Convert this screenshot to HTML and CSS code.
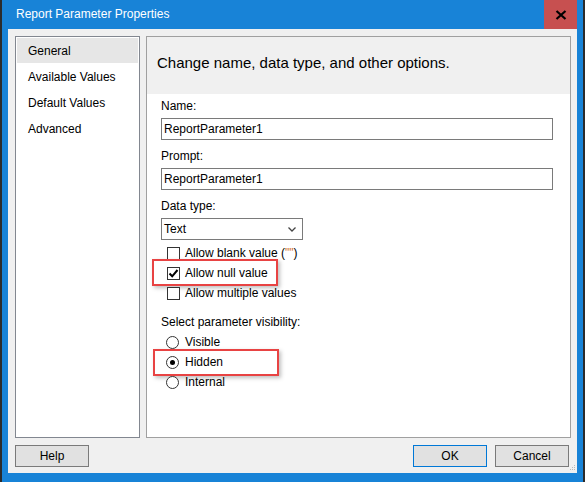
FILE: index.html
```html
<!DOCTYPE html>
<html lang="en">
<head>
<meta charset="utf-8">
<title>Report Parameter Properties</title>
<link rel="stylesheet" href="styles.css">
</head>
<body>
<div class="window">
  <div class="titlebar">
    <span class="title">Report Parameter Properties</span>
    <div class="close">
      <svg width="12" height="10" viewBox="0 0 12 10"><path d="M1.5 1 L10.5 9 M10.5 1 L1.5 9" stroke="#000" stroke-width="2.2" fill="none"/></svg>
    </div>
  </div>
  <div class="client">
    <div class="main">
      <ul class="nav">
        <li class="active">General</li>
        <li>Available Values</li>
        <li>Default Values</li>
        <li>Advanced</li>
      </ul>
      <div class="page">
        <div class="page-head">Change name, data type, and other options.</div>
        <div class="page-body">
          <div class="field-label">Name:</div>
          <div class="textbox">ReportParameter1</div>
          <div class="field-label">Prompt:</div>
          <div class="textbox">ReportParameter1</div>
          <div class="field-label">Data type:</div>
          <div class="select">
            <span>Text</span>
            <svg width="8" height="5" viewBox="0 0 8 5"><path d="M0.5 0.5 L4 4 L7.5 0.5" stroke="#444" stroke-width="1.3" fill="none"/></svg>
          </div>
          <div class="checks">
            <div class="opt"><span class="box"></span><span>Allow blank value <span class="q">(</span><span class="quote">""</span><span class="q">)</span></span></div>
            <div class="opt hl"><span class="box"><svg width="11" height="11" viewBox="0 0 11 11"><path d="M1.5 5.5 L4.2 8.3 L9.5 2" stroke="#000" stroke-width="2" fill="none"/></svg></span><span>Allow null value</span><span class="mark mark-null"></span></div>
            <div class="opt"><span class="box"></span><span>Allow multiple values</span></div>
          </div>
          <div class="field-label vis-label">Select parameter visibility:</div>
          <div class="radios">
            <div class="opt"><span class="radio"></span><span>Visible</span></div>
            <div class="opt hl"><span class="radio on"></span><span>Hidden</span><span class="mark mark-hidden"></span></div>
            <div class="opt"><span class="radio"></span><span>Internal</span></div>
          </div>
        </div>
      </div>
    </div>
    <div class="buttons">
      <button class="btn">Help</button>
      <span class="spacer"></span>
      <button class="btn focus">OK</button>
      <button class="btn">Cancel</button>
    </div>
    <svg class="grip" width="6" height="6" viewBox="0 0 6 6">
      <rect x="4" y="0" width="1" height="1" fill="#b8b8b8"/>
      <rect x="2" y="2" width="1" height="1" fill="#b8b8b8"/>
      <rect x="4" y="2" width="1" height="1" fill="#b8b8b8"/>
      <rect x="0" y="4" width="1" height="1" fill="#b8b8b8"/>
      <rect x="2" y="4" width="1" height="1" fill="#b8b8b8"/>
      <rect x="4" y="4" width="1" height="1" fill="#b8b8b8"/>
    </svg>
  </div>
</div>
</body>
</html>
```
FILE: styles.css
```css
* { box-sizing: border-box; }
html, body {
  margin: 0;
  padding: 0;
  width: 585px;
  height: 482px;
  overflow: hidden;
  background: #2b2b2b;
}
body {
  font-family: "Liberation Sans", Arial, sans-serif;
  font-size: 12px;
  color: #000;
}
.window {
  width: 585px;
  height: 482px;
  border-left: 2px solid #2b2b2b;
  border-right: 2px solid #2b2b2b;
  background: #1883d7;
  display: flex;
  flex-direction: column;
}
.titlebar {
  height: 29px;
  display: flex;
  align-items: stretch;
  flex-shrink: 0;
}
.title {
  color: #fff;
  padding-left: 14px;
  line-height: 29px;
  font-size: 12px;
}
.close {
  margin-left: auto;
  margin-right: 6px;
  width: 33px;
  background: #c75050;
  display: flex;
  align-items: center;
  justify-content: center;
}
.client {
  position: relative;
  flex: 1;
  margin: 0 6px 9px 6px;
  background: #f0f0f0;
  padding: 7px 6px 0 7px;
  display: flex;
  flex-direction: column;
}
.main {
  display: flex;
  gap: 6px;
  height: 402px;
}
.nav {
  list-style: none;
  margin: 0;
  padding: 1px;
  width: 125px;
  background: #fff;
  border: 1px solid #828790;
}
.nav li {
  height: 26px;
  line-height: 26px;
  padding-left: 11px;
  white-space: nowrap;
}
.nav li.active {
  background: #e6e6e6;
  height: 25px;
  margin-bottom: 1px;
}
.page {
  flex: 1;
  border: 1px solid #a0a0a0;
  background: #fff;
  display: flex;
  flex-direction: column;
}
.page-head {
  height: 57px;
  background: #f0f0f0;
  padding-left: 10px;
  padding-top: 16px;
  font-size: 15px;
  line-height: 20px;
}
.page-body {
  padding: 4px 17px 0 14px;
}
.field-label {
  height: 16px;
  line-height: 16px;
  margin: 8px 0 4px;
}
.page-body > .field-label:first-child { margin-top: 0; }
.textbox {
  height: 22px;
  border: 1px solid #7a7a7a;
  background: #fff;
  line-height: 20px;
  padding-left: 2px;
}
.select {
  width: 142px;
  height: 22px;
  border: 1px solid #7a7a7a;
  background: #fff;
  display: flex;
  align-items: center;
  justify-content: space-between;
  padding: 0 6px 0 2px;
}
.checks { margin-top: 3px; }
.opt {
  position: relative;
  height: 20px;
  display: flex;
  align-items: center;
}
.box {
  width: 13px;
  height: 13px;
  border: 1px solid #333;
  background: #fff;
  margin-left: 6px;
  margin-right: 5px;
  display: flex;
  align-items: center;
  justify-content: center;
}
.quote { color: #d2702c; }
.vis-label { margin-top: 11px; margin-bottom: 2px; }
.radio {
  width: 13px;
  height: 13px;
  border: 1px solid #333;
  border-radius: 50%;
  background: #fff;
  margin-left: 5px;
  margin-right: 6px;
  display: flex;
  align-items: center;
  justify-content: center;
}
.radio.on::after {
  content: "";
  width: 5px;
  height: 5px;
  border-radius: 50%;
  background: #000;
}
.mark {
  position: absolute;
  width: 126px;
  height: 27px;
  border: 2px solid #e84343;
  box-shadow: 2px 2px 4px rgba(0,0,0,0.25);
}
.mark-null { left: -9px; top: -4px; }
.mark-hidden { left: -8px; top: -3px; }
.buttons {
  display: flex;
  margin-top: 7px;
  padding-right: 2px;
  gap: 8px;
}
.spacer { flex: 1; }
.btn {
  width: 74px;
  height: 22px;
  font-family: inherit;
  font-size: 12px;
  color: #000;
  background: #e1e1e1;
  border: 1px solid #7a7a7a;
  padding: 0;
  margin: 0;
}
.btn.focus { border-color: #0078d7; }
.grip {
  position: absolute;
  right: 1px;
  bottom: 2px;
}
```
